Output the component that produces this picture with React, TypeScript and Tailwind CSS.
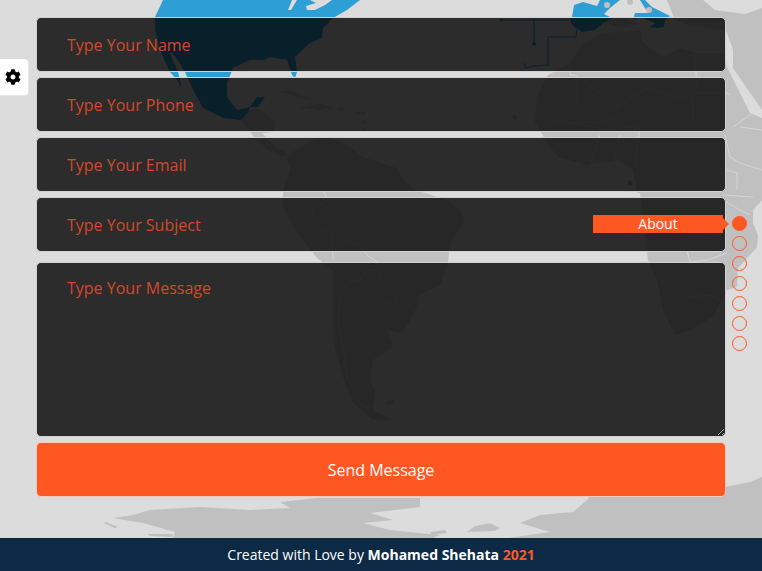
import { FaCog } from "react-icons/fa"

const fields = ["Name", "Phone", "Email", "Subject"]
const bullets = [0, 1, 2, 3, 4, 5, 6]

const fieldClass =
  "block w-full rounded-[5px] border border-[#d0d0d0] bg-black/80 px-[30px] text-base text-[#ff5722] outline-none placeholder:text-[#d4482a]"

function WorldMap() {
  return (
    <svg className="absolute inset-0 h-[538px] w-[762px]" viewBox="0 0 762 538" fill="none">
      {/* north america */}
      <path
        fill="#2d9fd4"
        d="M163 0L155 17L155 30L160 50L170 72L177 80L182 88L185 88L193 90L203 108L223 118L240 120L248 115L250 107L257 97L265 97L258 107L250 107L237 110L227 97L227 83L233 68L250 60L265 60L270 57L287 60L292 75L295 78L297 72L295 57L310 43L322 38L323 28L333 18L347 10L360 0Z"
      />
      <path fill="#dcdcdc" d="M170 53L173 53L185 72L193 90L182 88L178 72ZM288 10L291 10L297 0L292 0ZM307 10L315 10L325 5L332 0L310 0L316 3L306 6Z" />
      {/* central america and caribbean */}
      <path
        fill="#c0c0c0"
        d="M241 120L250 110L258 108L275 122L273 132L262 133L275 147L287 153L297 150L282 157L268 150L255 138ZM277 92L290 90L303 96L314 100L300 98L288 94ZM298 108L320 104L334 108L320 110ZM338 108L344 108L342 111Z"
      />
      <circle cx="358" cy="113" r="2" fill="#c0c0c0" />
      <circle cx="363" cy="113" r="2" fill="#c0c0c0" />
      <circle cx="364" cy="122" r="2" fill="#c0c0c0" />
      <circle cx="364" cy="130" r="2" fill="#c0c0c0" />
      {/* south america */}
      <path
        fill="#c0c0c0"
        d="M297 150L287 157L290 170L283 190L283 207L297 233L317 258L333 270L333 307L335 347L343 377L353 403L373 420L393 420L373 410L375 390L370 380L373 360L393 347L387 330L403 333L417 307L417 297L440 285L448 263L450 243L465 220L460 210L447 200L425 193L415 190L403 180L397 168L381 163L363 157L350 147L330 137L317 137Z"
      />
      <path fill="#c0c0c0" d="M388 400L395 400L393 405L386 404Z" />
      {/* africa */}
      <path
        fill="#c0c0c0"
        d="M535 123L537 97L548 75L570 63L582 45L602 33L620 32L640 30L642 42L663 57L680 48L697 53L725 53L727 67L750 113L762 118L762 200L753 210L753 223L758 235L757 247L738 268L737 287L727 290L720 303L713 317L690 330L675 335L663 310L657 280L648 260L640 193L637 193L633 170L617 160L587 165L558 157L550 147Z"
      />
      {/* europe and asia */}
      <path
        fill="#c0c0c0"
        d="M703 0L715 10L745 14L762 8L762 110L733 68L733 50L727 33L725 30L690 25L675 20L667 0Z"
      />
      <path fill="#c0c0c0" d="M600 20L625 18L640 24L620 28Z" />
      {/* blue europe */}
      <path
        fill="#2d9fd4"
        d="M570 18L572 17L574 5L583 2L597 6L600 0L620 0L610 8L604 14L612 18L605 22L595 30L582 32L572 25Z"
      />
      <path fill="#2d9fd4" d="M633 20L635 13L648 13L640 0L645 0L652 7L670 16L665 20L664 27L658 28L650 27L655 23L640 17Z" />
      <circle cx="607" cy="5" r="3" fill="#c0c0c0" />
      <circle cx="630" cy="2" r="3" fill="#c0c0c0" />
      <circle cx="649" cy="10" r="3" fill="#c0c0c0" />
      {/* cables */}
      <path stroke="#2d9fd4" d="M501 20H578L576 37H548V65L535 66L525 68L525 63M534 20V44" />
      <circle cx="501" cy="20" r="1.5" fill="#2d9fd4" />
      <circle cx="534" cy="44" r="2" fill="#2d9fd4" />
      <circle cx="515" cy="117" r="2.5" fill="#c0c0c0" />
      <circle cx="630" cy="183" r="2.5" fill="#a8a8a8" />
      {/* borders */}
      <g stroke="#dcdcdc" strokeWidth="0.8">
        <path d="M323 190L328 200L313 210L312 220L322 230L332 235L333 260M343 230L347 240L363 248L367 255L377 262L380 280L393 293L397 300L382 303M360 280L367 270L377 270M360 280L347 283L340 293L338 323L343 347L347 377L363 407L377 407" />
        <path d="M570 63V75H575L617 105H620L647 88L663 93L693 100M695 50L697 93H727L730 95M693 100V120L687 127M617 105L618 117L600 123L578 122L577 80M555 120L610 130L640 125M640 125L635 165M600 135L590 165M620 135L615 160" />
        <path d="M725 135L730 157L740 163L762 170M733 127L753 113M740 127L762 130M727 170L737 173L737 190M723 195L753 197M723 200L740 210L750 215" />
        <path d="M687 250L690 262L708 260L727 253M710 237L717 243M678 267V290M690 297L710 295L720 300" />
      </g>
      {/* antarctica */}
      <path
        fill="#c0c0c0"
        d="M113 518L133 515L150 510L200 507L250 510L290 508L280 502L317 498L420 498L420 507L370 513L393 520L363 523L390 530L440 535L433 538H173L175 532L143 523ZM103 523L106 522L118 527L115 528Z"
      />
      <path
        fill="#c0c0c0"
        d="M147 534L172 534L173 537L150 536ZM508 538L550 532L520 523L540 515L573 512L587 500L590 495L725 487L750 482L762 477V538ZM467 532L475 526L490 523L500 528L495 531ZM430 532L445 530L447 533L432 535Z"
      />
      <path fill="#dcdcdc" d="M405 527L412 524L414 525L407 529Z" />
    </svg>
  )
}

export default function App() {
  return (
    <div className="relative flex h-[571px] w-[762px] flex-col overflow-hidden bg-[#dcdcdc] font-['Open_Sans',sans-serif]">
      <WorldMap />

      <form className="relative flex flex-col px-[36px] pt-[17px]">
        {fields.map((field) => (
          <input
            key={field}
            type="text"
            placeholder={`Type Your ${field}`}
            className={`${fieldClass} mb-[5px] h-[55px]`}
          />
        ))}
        <textarea
          placeholder="Type Your Message"
          className={`${fieldClass} mt-[5px] h-[175px] py-[13px]`}
        />
        <button
          type="button"
          className="mt-[5px] h-[55px] rounded-[5px] border border-[#f7c9b8] bg-[#ff5722] text-base text-white"
        >
          Send Message
        </button>
      </form>

      {/* settings toggle */}
      <div className="absolute left-0 top-[59px] flex h-[36px] w-[28px] items-center justify-center rounded-r-[4px] bg-white pr-[2px] shadow-[1px_1px_0_#e8e8e8]">
        <FaCog className="text-base text-black" />
      </div>

      {/* side bullets */}
      <div className="absolute left-[732px] top-[216px] flex flex-col gap-[5px]">
        {bullets.map((b) => (
          <div
            key={b}
            className={`h-[15px] w-[15px] rounded-full border border-[#ff5722] ${b === 0 ? "bg-[#ff5722]" : ""}`}
          />
        ))}
      </div>
      <div className="absolute left-[593px] top-[215px] flex h-[18px] w-[130px] items-center justify-center bg-[#ff5722] text-sm leading-none text-white">
        About
        <span className="absolute left-full top-[3px] border-y-[6px] border-l-[6px] border-y-transparent border-l-[#ff5722]" />
      </div>

      <footer className="relative mt-auto flex h-[33px] items-center justify-center bg-[#0c2a45] text-sm text-white">
        <span>
          Created with Love by <b>Mohamed Shehata</b> <b className="text-[#ff5722]">2021</b>
        </span>
      </footer>
    </div>
  )
}
